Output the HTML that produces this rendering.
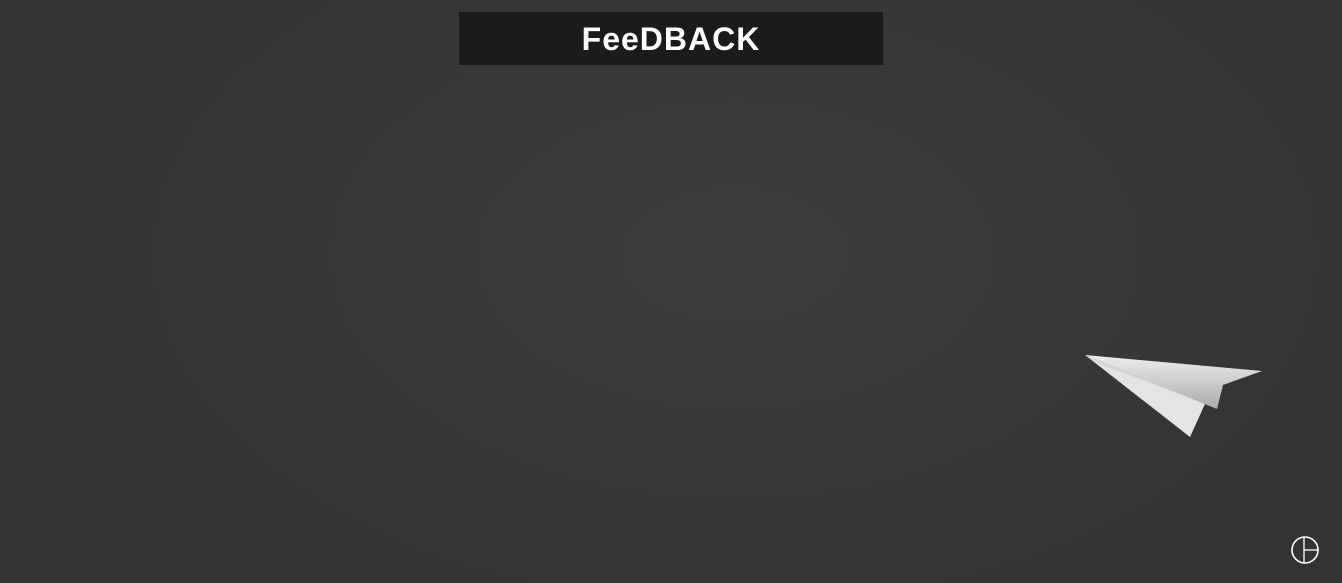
<!DOCTYPE html>
<html><head><style>
html,body{margin:0;width:1342px;height:583px;overflow:hidden}
body{background:radial-gradient(ellipse 700px 420px at 735px 255px,#3d3d3d 0%,#383838 50%,#333 100%);position:relative;font-family:"Liberation Sans",sans-serif}
.t{position:absolute;left:459px;top:12px;width:424px;height:53px;background:#1b1b1b;color:#fff;text-align:center;font:900 32px/54px "Liberation Sans",sans-serif;letter-spacing:1px}
</style></head><body>
<div class="t">FeeDBACK</div>
<svg width="1342" height="583" style="position:absolute;left:0;top:0">
<defs><linearGradient id="g" x1="0" y1="0" x2="0" y2="1"><stop offset="0" stop-color="#eee"/><stop offset="1" stop-color="#aaa"/></linearGradient></defs>
<polygon points="1085,355 1262,371 1223,385 1217,409" fill="url(#g)"/>
<polygon points="1085,355 1217,409 1205,404 1190,437" fill="#e4e4e4"/>
<polygon points="1085,355 1205,404 1100,364" fill="#d6d6d6"/>
<circle cx="1305" cy="550" r="13" fill="none" stroke="#fff" stroke-width="1.6"/>
<line x1="1304" y1="537" x2="1304" y2="563" stroke="#fff" stroke-width="1.3"/>
<line x1="1304" y1="550" x2="1318" y2="550" stroke="#fff" stroke-width="1.3"/>
</svg>
</body></html>
